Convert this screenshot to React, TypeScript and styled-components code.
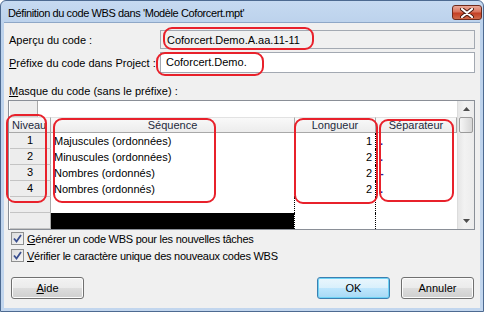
import styled, { createGlobalStyle } from 'styled-components';

const GlobalStyle = createGlobalStyle`
  html, body {
    margin: 0;
    padding: 0;
    background: #fff;
  }
  body {
    font-family: 'Liberation Sans', Arial, sans-serif;
    font-size: 11px;
    color: #000;
  }
`;

type MaskRow = {
  niveau: number;
  sequence: string;
  longueur: number;
  separateur: string;
};

const rows: MaskRow[] = [
  { niveau: 1, sequence: 'Majuscules (ordonnées)', longueur: 1, separateur: '.' },
  { niveau: 2, sequence: 'Minuscules (ordonnées)', longueur: 2, separateur: '.' },
  { niveau: 3, sequence: 'Nombres (ordonnés)', longueur: 2, separateur: '-' },
  { niveau: 4, sequence: 'Nombres (ordonnés)', longueur: 2, separateur: '.' },
];

// red annotation marks drawn on top of the dialog
const marks = [
  { x: 162, y: 26, w: 151, h: 23 },
  { x: 155, y: 51, w: 108, h: 24 },
  { x: 5, y: 113, w: 41, h: 89 },
  { x: 52, y: 117, w: 163, h: 85 },
  { x: 293, y: 117, w: 84, h: 86 },
  { x: 378, y: 118, w: 75, h: 83 },
];

const App = () => {
  return (
    <>
      <GlobalStyle />
      <Window>
        <TitleBar>
          <Title>Définition du code WBS dans 'Modèle Coforcert.mpt'</Title>
          <CloseButton>
            <svg width="14" height="10" viewBox="0 0 14 10">
              <path d="M2 1 L12 9 M12 1 L2 9" stroke="#4a1a10" strokeWidth="4" strokeLinecap="round" />
              <path d="M2 1 L12 9 M12 1 L2 9" stroke="#fff" strokeWidth="2.2" strokeLinecap="round" />
            </svg>
          </CloseButton>
        </TitleBar>
        <Body>
          <FieldRow>
            <Label>Aperçu du code :</Label>
            <TextBox $readOnly>Coforcert.Demo.A.aa.11-11</TextBox>
          </FieldRow>
          <FieldRow $tall>
            <Label>
              <u>P</u>réfixe du code dans Project :
            </Label>
            <TextBox $tall>Coforcert.Demo.</TextBox>
          </FieldRow>
          <SectionLabel>
            <u>M</u>asque du code (sans le préfixe) :
          </SectionLabel>
          <GridBox>
            <CornerCell>
              <CornerBlock />
            </CornerCell>
            <BlankCell style={{ gridColumn: '2 / 5' }} />
            <Scrollbar>
              <ScrollArrow>
                <svg width="7" height="4" viewBox="0 0 7 4">
                  <path d="M0 4 L3.5 0 L7 4 Z" fill="#4d4d4d" />
                </svg>
              </ScrollArrow>
              <Thumb />
              <ScrollTrack />
              <ScrollArrow>
                <svg width="7" height="4" viewBox="0 0 7 4">
                  <path d="M0 0 L3.5 4 L7 0 Z" fill="#4d4d4d" />
                </svg>
              </ScrollArrow>
            </Scrollbar>

            <HeaderCell $align="left">Niveau</HeaderCell>
            <HeaderCell>Séquence</HeaderCell>
            <HeaderCell>Longueur</HeaderCell>
            <HeaderCell>Séparateur</HeaderCell>

            {rows.map((r) => (
              <Row key={r.niveau}>
                <RowHead>{r.niveau}</RowHead>
                <Cell>{r.sequence}</Cell>
                <Cell $align="right" $dotted>
                  {r.longueur}
                </Cell>
                <Cell $dotted $sep>
                  {r.separateur}
                </Cell>
              </Row>
            ))}
            <Row>
              <RowHead />
              <Cell />
              <Cell $dotted />
              <Cell $dotted />
            </Row>
            <Row>
              <RowHead />
              <Cell $selected />
              <Cell $dotted />
              <Cell $dotted />
            </Row>
          </GridBox>
          <CheckRow>
            <CheckBox />
            <span>
              <u>G</u>énérer un code WBS pour les nouvelles tâches
            </span>
          </CheckRow>
          <CheckRow>
            <CheckBox />
            <span>
              <u>V</u>érifier le caractère unique des nouveaux codes WBS
            </span>
          </CheckRow>
          <ButtonBar>
            <Button>
              <u>A</u>ide
            </Button>
            <Spacer />
            <Button $default>OK</Button>
            <Button>Annuler</Button>
          </ButtonBar>
        </Body>
        {marks.map((m, i) => (
          <Mark key={i} style={{ left: m.x, top: m.y, width: m.w, height: m.h }} />
        ))}
      </Window>
    </>
  );
};

const CheckBox = () => (
  <Box>
    <svg width="9" height="9" viewBox="0 0 9 9">
      <path d="M1 4.5 L3.5 7.5 L8 1" fill="none" stroke="#3a4f8f" strokeWidth="1.8" />
    </svg>
  </Box>
);

const Window = styled.div`
  position: relative;
  width: 484px;
  height: 312px;
  box-sizing: border-box;
  display: flex;
  flex-direction: column;
  border: 1px solid #4d6a91;
  border-radius: 6px 6px 0 0;
  background: linear-gradient(#c6daf1, #bcd2ec 22px, #c2d6ee);
  padding: 0 3px 3px;
  overflow: hidden;
`;

const TitleBar = styled.div`
  height: 21px;
  display: flex;
  align-items: flex-start;
  justify-content: space-between;
  flex-shrink: 0;
`;

const Title = styled.div`
  font-size: 11px;
  letter-spacing: -0.4px;
  line-height: 14px;
  padding: 5px 0 0 4px;
  color: #000;
`;

const CloseButton = styled.div`
  width: 30px;
  height: 15px;
  box-sizing: border-box;
  margin-top: 4px;
  margin-right: -2px;
  border: 1px solid #6e2a1c;
  border-radius: 3px;
  background: linear-gradient(#eaa898, #d9745d 45%, #c43f24 55%, #cf6a4a);
  display: flex;
  align-items: center;
  justify-content: center;
`;

const Body = styled.div`
  flex: 1;
  display: flex;
  flex-direction: column;
  background: #f0f0f0;
  border: 1px solid #8ea7c7;
  border-width: 1px 0 0;
  padding: 0 5px 0 4px;
`;

const FieldRow = styled.div<{ $tall?: boolean }>`
  display: flex;
  align-items: ${(p) => (p.$tall ? 'flex-start' : 'center')};
  height: ${(p) => (p.$tall ? 21 : 19)}px;
  margin-top: ${(p) => (p.$tall ? 3 : 7)}px;
`;

const Label = styled.div`
  flex: 1;
  padding-left: 1px;
  line-height: 14px;
  align-self: center;
`;

const TextBox = styled.div<{ $readOnly?: boolean; $tall?: boolean }>`
  width: 315px;
  height: 100%;
  box-sizing: border-box;
  border: 1px solid #a3a9b2;
  background: ${(p) => (p.$readOnly ? '#f0f0f0' : '#fff')};
  padding: ${(p) => (p.$tall ? '2px 0 0 5px' : '0 0 0 6px')};
  display: flex;
  align-items: ${(p) => (p.$tall ? 'flex-start' : 'center')};
  line-height: 14px;
`;

const SectionLabel = styled.div`
  margin-top: 11px;
  padding-left: 1px;
  line-height: 14px;
`;

const GridBox = styled.div`
  margin-top: 2px;
  width: 467px;
  box-sizing: border-box;
  border: 1px solid #8a8f97;
  background: #fff;
  display: grid;
  grid-template-columns: 42px 244px 81px 81px 17px;
  grid-template-rows: repeat(8, 16px);
`;

const CornerCell = styled.div`
  background: #fff;
  padding-left: 1px;
`;

const CornerBlock = styled.div`
  width: 28px;
  height: 16px;
  box-sizing: border-box;
  background: #ededed;
  border-right: 1px solid #a8a8a8;
  border-bottom: 1px solid #d0d0d0;
`;

const BlankCell = styled.div`
  background: #fff;
`;

const Scrollbar = styled.div`
  grid-column: 5;
  grid-row: 1 / -1;
  display: flex;
  flex-direction: column;
  background: linear-gradient(90deg, #e6e6e6, #f2f2f2 40%, #ececec);
  border-left: 1px solid #dcdcdc;
`;

const ScrollArrow = styled.div`
  height: 16px;
  display: flex;
  align-items: center;
  justify-content: center;
  flex-shrink: 0;
`;

const Thumb = styled.div`
  height: 16px;
  margin: 0 1px;
  box-sizing: border-box;
  border: 1px solid #9b9b9b;
  border-radius: 2px;
  background: linear-gradient(90deg, #f6f6f6, #e6e6e6 50%, #d6d6d6);
  flex-shrink: 0;
`;

const ScrollTrack = styled.div`
  flex: 1;
`;

const HeaderCell = styled.div<{ $align?: 'left' | 'center' }>`
  background: linear-gradient(#f9f9f9, #ececec);
  border-right: 1px solid #a8a8a8;
  border-bottom: 1px solid #a8a8a8;
  border-top: 1px solid #e2e2e2;
  box-sizing: border-box;
  line-height: 14px;
  text-align: ${(p) => p.$align ?? 'center'};
  padding-left: ${(p) => (p.$align === 'left' ? 3 : 0)}px;
  white-space: nowrap;
  overflow: hidden;
  color: #1e2a3c;
`;

const Row = styled.div`
  display: contents;
`;

const RowHead = styled.div`
  margin-left: 1px;
  background: #ededed;
  border-right: 1px solid #a8a8a8;
  border-bottom: 1px solid #c4c4c4;
  box-sizing: border-box;
  text-align: center;
  line-height: 15px;
`;

const Cell = styled.div<{
  $align?: 'left' | 'right';
  $dotted?: boolean;
  $sep?: boolean;
  $selected?: boolean;
}>`
  background: ${(p) => (p.$selected ? '#000' : '#fff')};
  border-left: 1px ${(p) => (p.$dotted ? 'dotted #000' : 'solid transparent')};
  margin-left: ${(p) => (p.$dotted ? -1 : 0)}px;
  box-sizing: border-box;
  line-height: 16px;
  padding: ${(p) => (p.$align === 'right' ? '0 4px 0 0' : p.$sep ? '0 0 0 4px' : '0 0 0 2px')};
  text-align: ${(p) => p.$align ?? 'left'};
  color: ${(p) => (p.$sep ? '#3b1f8c' : '#000')};
  font-weight: ${(p) => (p.$sep ? 'bold' : 'normal')};
  white-space: nowrap;
  overflow: hidden;
`;

const CheckRow = styled.div`
  display: flex;
  align-items: center;
  gap: 3px;
  height: 17px;
  padding-left: 3px;
  letter-spacing: -0.25px;
  &:first-of-type {
    margin-top: 3px;
  }
`;

const Box = styled.div`
  width: 13px;
  height: 13px;
  box-sizing: border-box;
  border: 1px solid #8e8f8f;
  background: linear-gradient(135deg, #dcdcdc, #f6f6f6);
  display: flex;
  align-items: center;
  justify-content: center;
  flex-shrink: 0;
`;

const ButtonBar = styled.div`
  display: flex;
  gap: 11px;
  margin-top: 13px;
  padding: 0 1px 0 3px;
`;

const Spacer = styled.div`
  flex: 1;
`;

const Button = styled.div<{ $default?: boolean }>`
  width: 73px;
  height: 22px;
  box-sizing: border-box;
  border: 1px solid ${(p) => (p.$default ? '#3c7fb1' : '#707070')};
  border-radius: 3px;
  background: ${(p) =>
    p.$default
      ? 'linear-gradient(#eaf6fd, #d9f0fc 50%, #bee6fd 51%, #a7d9f5)'
      : 'linear-gradient(#f2f2f2, #ebebeb 50%, #dddddd 51%, #cfcfcf)'};
  box-shadow: inset 0 0 0 1px ${(p) => (p.$default ? '#6fd3f5' : '#fcfcfc')};
  display: flex;
  align-items: center;
  justify-content: center;
  line-height: 14px;
`;

const Mark = styled.div`
  position: absolute;
  box-sizing: border-box;
  border: 2px solid #e8212b;
  border-radius: 9px;
  pointer-events: none;
`;

export default App;
